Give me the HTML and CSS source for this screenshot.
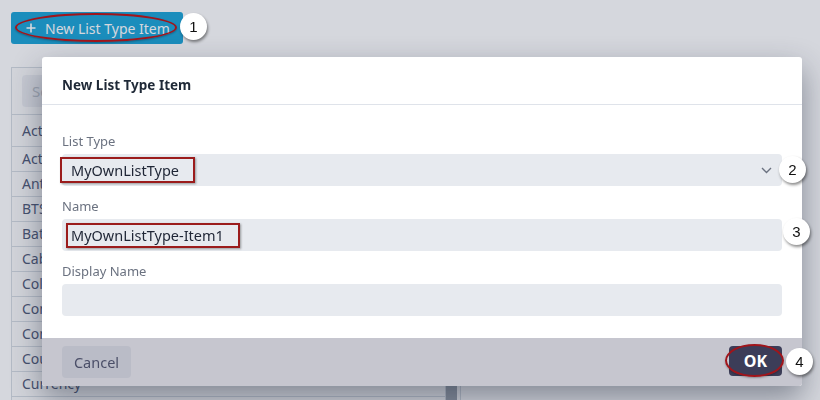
FILE: index.html
```html
<!DOCTYPE html>
<html lang="en">
<head>
    <meta charset="UTF-8">
    <meta name="viewport" content="width=device-width, initial-scale=1.0">
    <title>List Type Items</title>
    <link rel="stylesheet" href="styles.css">
</head>
<body>

    <div class="page">
        <div class="toolbar">
            <button class="btn-new">
                <svg class="plus" width="10" height="10" viewBox="0 0 10 10"><path d="M5 0.5V9.5M0.5 5H9.5" stroke="#fff" stroke-width="1.6" fill="none"/></svg>
                <span>New List Type Item</span>
                <span class="ring ring-new"></span>
            </button>
        </div>

        <div class="panel">
            <div class="list">
                <div class="search-wrap">
                    <div class="search">Search</div>
                </div>
                <div class="row first">Action Type</div>
                <div class="row">Activity Status</div>
                <div class="row">Antenna Type</div>
                <div class="row">BTS Model</div>
                <div class="row">Battery Type</div>
                <div class="row">Cable Type</div>
                <div class="row">Color</div>
                <div class="row">Connector Type</div>
                <div class="row">Contract Type</div>
                <div class="row">Country</div>
                <div class="row">Currency</div>
            </div>
            <div class="scroll"><div class="thumb"></div></div>
        </div>
    </div>

    <div class="backdrop"></div>

    <div class="modal">
        <div class="modal-header">New List Type Item</div>
        <div class="modal-body">
            <div class="field-label">List Type</div>
            <div class="field select">
                <span class="mark mark-type">MyOwnListType</span>
                <svg class="chevron" width="11" height="7" viewBox="0 0 11 7"><path d="M1 1L5.5 5.5L10 1" stroke="#6b7280" stroke-width="1.4" fill="none"/></svg>
            </div>

            <div class="field-label">Name</div>
            <div class="field">
                <span class="mark mark-name">MyOwnListType-Item1</span>
            </div>

            <div class="field-label">Display Name</div>
            <div class="field"></div>
        </div>
        <div class="modal-footer">
            <button class="btn-cancel">Cancel</button>
            <button class="btn-ok">OK<span class="ring ring-ok"></span></button>
        </div>
    </div>

    <span class="badge badge-1">1</span>
    <span class="badge badge-2">2</span>
    <span class="badge badge-3">3</span>
    <span class="badge badge-4">4</span>

</body>
</html>
```

FILE: styles.css
```css
body {
    margin: 0;
    height: 400px;
    overflow: hidden;
    font-family: "Noto Sans", "Open Sans", sans-serif;
    background: #ffffff;
}

.page {
    height: 400px;
    overflow: hidden;
}

.toolbar {
    padding: 12px 0 0 11px;
    display: flex;
}

.btn-new {
    position: relative;
    display: flex;
    align-items: center;
    gap: 9px;
    height: 32px;
    padding: 0 13px 0 15px;
    border: none;
    border-radius: 3px;
    background-color: #14a2d6;
    color: #fff;
    font-family: inherit;
    font-size: 14px;
}

.ring {
    position: absolute;
    border: 2px solid #a0151b;
    border-radius: 50%;
    box-shadow: 0 1px 2px rgba(0, 0, 0, 0.3);
    z-index: 3;
}

.ring-new {
    left: 4px;
    top: 1px;
    width: 158px;
    height: 25px;
}

.panel {
    margin: 23px 0 0 11px;
    width: 450px;
    height: 333px;
    box-sizing: border-box;
    border: 1px solid #d4dae1;
    border-bottom: none;
    display: flex;
    background-color: #fbfbfc;
}

.list {
    flex: 1;
}

.search-wrap {
    padding: 7px 10px;
    border-bottom: 1px solid #d4dae1;
}

.search {
    height: 32px;
    line-height: 32px;
    border-radius: 4px;
    background-color: #eceef2;
    color: #bac0c8;
    font-size: 15px;
    padding-left: 10px;
}

.row {
    height: 24px;
    line-height: 24px;
    padding-left: 10px;
    border-bottom: 1px solid #d4dae1;
    color: #4a5573;
    font-size: 14px;
}

.row.first {
    height: 31px;
    line-height: 31px;
}

.scroll {
    width: 14px;
    border-left: 1px solid #d4dae1;
}

.thumb {
    margin: 300px 3px 0 0;
    height: 40px;
    background-color: #9aa1ab;
}

.backdrop {
    position: fixed;
    inset: 0;
    background: rgba(55, 68, 95, 0.21);
}

.modal {
    position: absolute;
    left: 42px;
    top: 57px;
    width: 760px;
    height: 329px;
    display: flex;
    flex-direction: column;
    background-color: #fff;
    border-radius: 3px;
    overflow: hidden;
    box-shadow: 0 12px 30px rgba(30, 40, 60, 0.45);
}

.modal-header {
    height: 48px;
    box-sizing: border-box;
    padding: 18px 20px 0;
    line-height: 20px;
    border-bottom: 1px solid #dfe3ea;
    font-weight: bold;
    font-size: 13.5px;
    color: #1f2937;
}

.modal-body {
    flex: 1;
    padding: 26px 20px 0;
}

.field-label {
    line-height: 20px;
    margin-bottom: 3px;
    font-size: 13px;
    color: #6b7280;
}

.field {
    height: 32px;
    margin-bottom: 10px;
    border-radius: 4px;
    background-color: #e7eaef;
    display: flex;
    align-items: center;
}

.select {
    justify-content: space-between;
    padding-right: 10px;
}

.mark {
    display: inline-block;
    border: 2px solid #9b1c1c;
    box-shadow: 1px 1px 2px rgba(0, 0, 0, 0.35);
    font-size: 14.5px;
    line-height: 20px;
    color: #1e2535;
}

.mark-type {
    margin-left: -2px;
    padding: 1px 14px 1px 9px;
}

.mark-name {
    margin-left: 4px;
    padding: 0 14px 1px 3px;
}

.modal-footer {
    height: 48px;
    box-sizing: border-box;
    padding: 8px 20px;
    display: flex;
    justify-content: space-between;
    align-items: flex-start;
    background-color: #c6c6cf;
}

.btn-cancel {
    height: 32px;
    width: 69px;
    border: none;
    border-radius: 4px;
    background-color: #babcc7;
    color: #4b4f68;
    font-family: inherit;
    font-size: 14.5px;
}

.btn-ok {
    position: relative;
    height: 30px;
    width: 53px;
    border: none;
    border-radius: 4px;
    background-color: #3c3d58;
    color: #fff;
    font-family: inherit;
    font-weight: bold;
    font-size: 16px;
}

.ring-ok {
    left: -4px;
    top: -2px;
    width: 55px;
    height: 29px;
}

.badge {
    position: absolute;
    width: 27px;
    height: 27px;
    border-radius: 50%;
    background-color: #fff;
    box-shadow: 1px 2px 3px rgba(0, 0, 0, 0.45);
    display: flex;
    align-items: center;
    justify-content: center;
    font-family: "Liberation Sans", Arial, sans-serif;
    font-size: 15px;
    color: #111;
}

.badge-1 { left: 180px; top: 13px; }
.badge-2 { left: 779px; top: 156px; }
.badge-3 { left: 783px; top: 218px; }
.badge-4 { left: 786px; top: 348px; }
```
